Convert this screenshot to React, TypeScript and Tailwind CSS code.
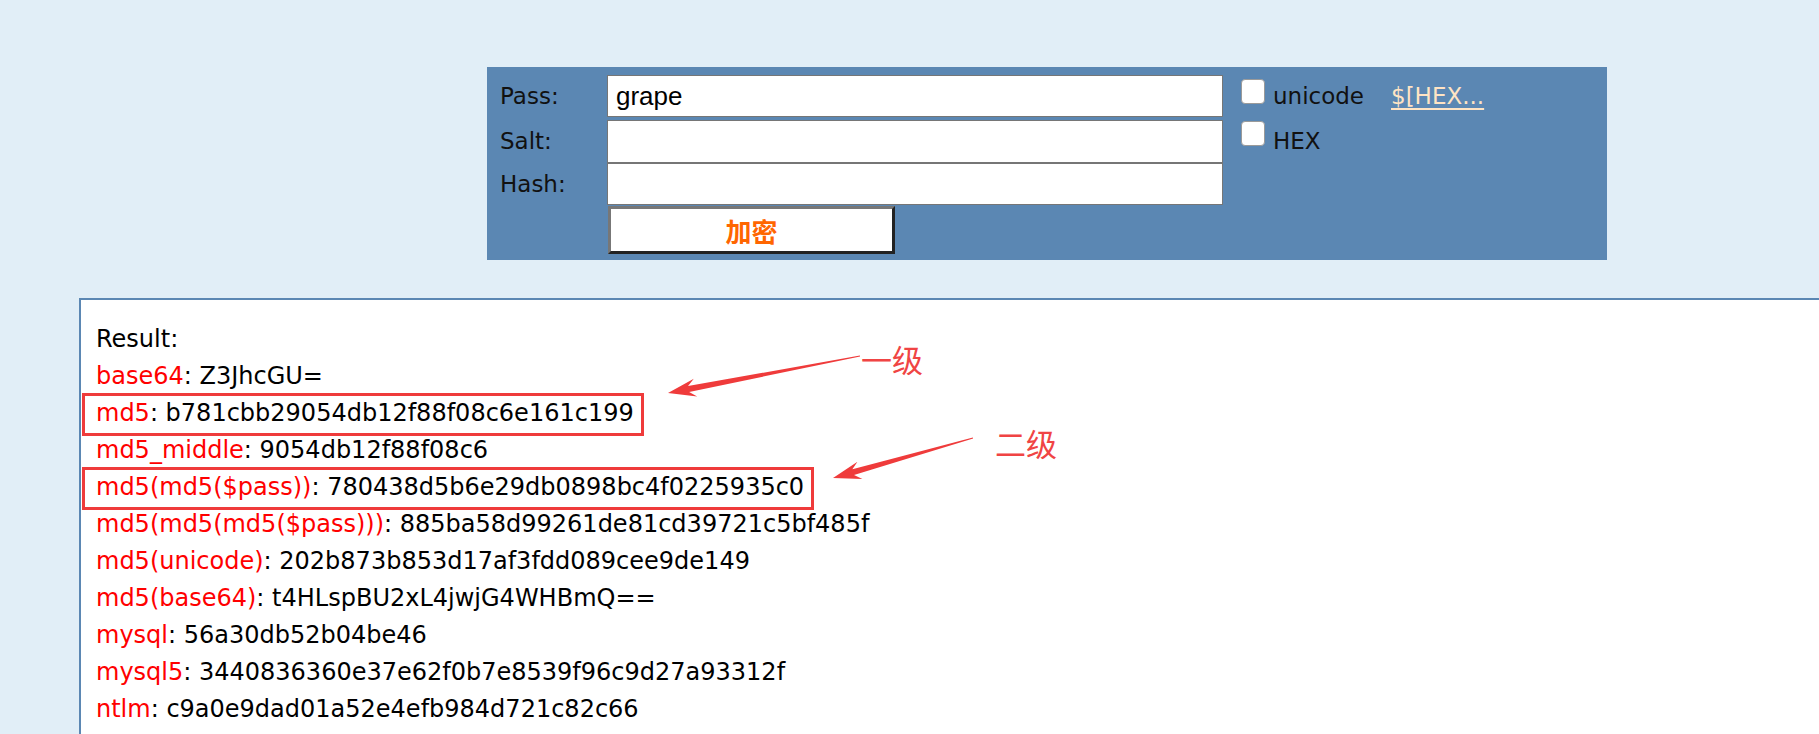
import React from "react";

type Line = { k: string; v: string; boxed?: boolean };

const lines: Line[] = [
  { k: "base64", v: "Z3JhcGU=" },
  { k: "md5", v: "b781cbb29054db12f88f08c6e161c199", boxed: true },
  { k: "md5_middle", v: "9054db12f88f08c6" },
  { k: "md5(md5($pass))", v: "780438d5b6e29db0898bc4f0225935c0", boxed: true },
  { k: "md5(md5(md5($pass)))", v: "885ba58d99261de81cd39721c5bf485f" },
  { k: "md5(unicode)", v: "202b873b853d17af3fdd089cee9de149" },
  { k: "md5(base64)", v: "t4HLspBU2xL4jwjG4WHBmQ==" },
  { k: "mysql", v: "56a30db52b04be46" },
  { k: "mysql5", v: "3440836360e37e62f0b7e8539f96c9d27a93312f" },
  { k: "ntlm", v: "c9a0e9dad01a52e4efb984d721c82c66" },
];

function arrowPoints(tx: number, ty: number, hx: number, hy: number) {
  const dx = hx - tx;
  const dy = hy - ty;
  const L = Math.hypot(dx, dy);
  const ux = dx / L;
  const uy = dy / L;
  const nx = -uy;
  const ny = ux;
  const p = (a: number, b: number) => `${hx - ux * a + nx * b},${hy - uy * a + ny * b}`;
  return [
    `${tx + nx * 0.4},${ty + ny * 0.4}`,
    p(21, 3),
    p(28, 9),
    `${hx},${hy}`,
    p(28, -9),
    p(21, -3),
    `${tx - nx * 0.4},${ty - ny * 0.4}`,
  ].join(" ");
}

function Checkbox() {
  return <span className="block w-[24px] h-[25px] bg-white rounded-[4px] border border-[#9a9a9a]" />;
}

export default function App() {
  return (
    <div className="relative w-[1819px] h-[734px] overflow-hidden bg-[#e1eef7] font-['DejaVu_Sans',sans-serif] text-black">
      <div className="pt-[67px] pl-[487px]">
        <div className="w-[1120px] h-[193px] bg-[#5b87b3] pt-[8px] pl-[13px] text-[23px] text-[#111]">
          <div className="flex h-[42px] items-center">
            <div className="w-[107px]">Pass:</div>
            <div className="w-[616px] h-[42px] bg-white border border-[#767676] flex items-center pl-[8px] font-['Liberation_Sans',sans-serif] text-[26px] text-black">
              grape
            </div>
            <div className="ml-[18px] self-start mt-[4px]">
              <Checkbox />
            </div>
            <div className="ml-[8px]">unicode</div>
            <div className="ml-[27px] text-[#ffe4c4] underline underline-offset-[4px]">$[HEX...</div>
          </div>
          <div className="flex h-[43px] items-center mt-[3px]">
            <div className="w-[107px]">Salt:</div>
            <div className="w-[616px] h-[43px] bg-white border border-[#767676]" />
            <div className="ml-[18px] self-start mt-[1px]">
              <Checkbox />
            </div>
            <div className="ml-[8px]">HEX</div>
          </div>
          <div className="flex h-[42px] items-center">
            <div className="w-[107px]">Hash:</div>
            <div className="w-[616px] h-[42px] bg-white border border-[#767676]" />
          </div>
          <div className="flex mt-[1px]">
            <div className="w-[108px]" />
            <div className="w-[287px] h-[48px] bg-white border-[3px] border-t-[#777777] border-l-[#777777] border-b-[#222222] border-r-[#222222] flex items-center justify-center font-['Noto_Sans_CJK_SC',sans-serif] font-bold text-[26px] text-[#ff6600]">
              加密
            </div>
          </div>
        </div>
      </div>

      <div className="mt-[38px] ml-[79px] h-[500px] bg-white border-l-2 border-t-2 border-[#5b87b3] pt-[21px] pl-[15px] text-[24px] leading-[37px]">
        <div>Result:</div>
        {lines.map((l) => (
          <div key={l.k} className="h-[37px] whitespace-nowrap">
            <span className="relative inline-block">
              <span className="text-[#ff0000]">{l.k}</span>: {l.v}
              {l.boxed && (
                <span className="absolute -left-[14px] -right-[10px] -top-[2px] -bottom-[4px] border-[3px] border-[#ef3b3b]" />
              )}
            </span>
          </div>
        ))}
      </div>

      <svg className="absolute left-0 top-0 pointer-events-none" width="1819" height="734">
        <polygon points={arrowPoints(860, 356, 668, 393)} fill="#ef3b3b" />
        <polygon points={arrowPoints(973, 438, 833, 478)} fill="#ef3b3b" />
      </svg>
      <div className="absolute left-[861px] top-[343px] leading-none text-[31px] text-[#f04444] font-['Noto_Sans_CJK_SC',sans-serif]">
        一级
      </div>
      <div className="absolute left-[995px] top-[427px] leading-none text-[31px] text-[#f04444] font-['Noto_Sans_CJK_SC',sans-serif]">
        二级
      </div>
    </div>
  );
}
